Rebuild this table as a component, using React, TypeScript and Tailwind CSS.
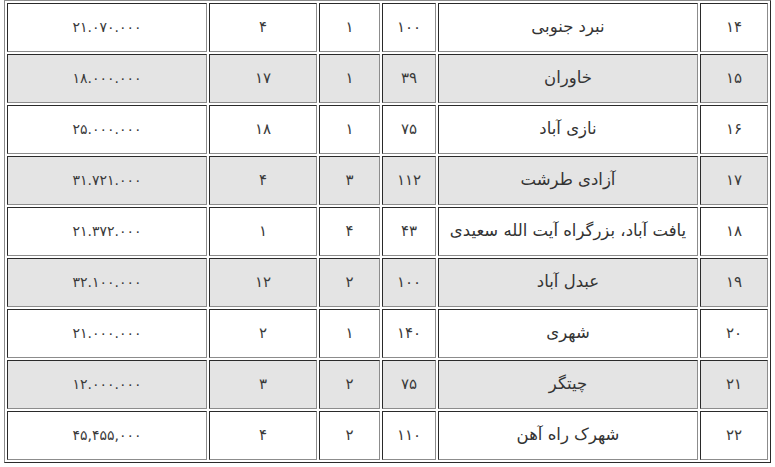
const ROWS = [
  { id: '۱۴', name: 'نبرد جنوبی', area: '۱۰۰', a: '۱', b: '۴', price: '۲۱.۰۷۰.۰۰۰' },
  { id: '۱۵', name: 'خاوران', area: '۳۹', a: '۱', b: '۱۷', price: '۱۸.۰۰۰.۰۰۰' },
  { id: '۱۶', name: 'نازی آباد', area: '۷۵', a: '۱', b: '۱۸', price: '۲۵.۰۰۰.۰۰۰' },
  { id: '۱۷', name: 'آزادی طرشت', area: '۱۱۲', a: '۳', b: '۴', price: '۳۱.۷۲۱.۰۰۰' },
  { id: '۱۸', name: 'یافت آباد، بزرگراه آیت الله سعیدی', area: '۴۳', a: '۴', b: '۱', price: '۲۱.۳۷۲.۰۰۰' },
  { id: '۱۹', name: 'عبدل آباد', area: '۱۰۰', a: '۲', b: '۱۲', price: '۳۲.۱۰۰.۰۰۰' },
  { id: '۲۰', name: 'شهری', area: '۱۴۰', a: '۱', b: '۲', price: '۲۱.۰۰۰.۰۰۰' },
  { id: '۲۱', name: 'چیتگر', area: '۷۵', a: '۲', b: '۳', price: '۱۲.۰۰۰.۰۰۰' },
  { id: '۲۲', name: 'شهرک راه آهن', area: '۱۱۰', a: '۲', b: '۴', price: '۴۵,۴۵۵,۰۰۰' },
];

const cell =
  'h-[49px] border border-t-[#2a2a2a] border-l-[#2a2a2a] border-b-[#8c8c8c] border-r-[#8c8c8c] p-0 text-center align-middle';

export default function App() {
  return (
    <div className="h-[467px] w-[775px] overflow-hidden bg-white pl-[4px] font-['DejaVu_Sans',sans-serif] text-[14px] text-[#3a3a3a]">
      <table
        dir="rtl"
        className="table-fixed border-separate border-spacing-[2px] border border-t-[#8c8c8c] border-l-[#8c8c8c] border-b-[#2a2a2a] border-r-[#2a2a2a]"
      >
        <tbody>
          {ROWS.map((r, i) => (
            <tr key={r.id} className={i % 2 === 1 ? 'bg-[#e4e4e4]' : 'bg-white'}>
              <td className={`${cell} w-[68px] text-[15px]`}>{r.id}</td>
              <td className={`${cell} w-[260px] text-[16.5px] text-[#333]`}>{r.name}</td>
              <td className={`${cell} w-[54px] text-[15px]`}>{r.area}</td>
              <td className={`${cell} w-[61px] text-[15px]`}>{r.a}</td>
              <td className={`${cell} w-[108px] text-[15px]`}>{r.b}</td>
              <td className={`${cell} w-[200px]`}>{r.price}</td>
            </tr>
          ))}
        </tbody>
      </table>
    </div>
  );
}
